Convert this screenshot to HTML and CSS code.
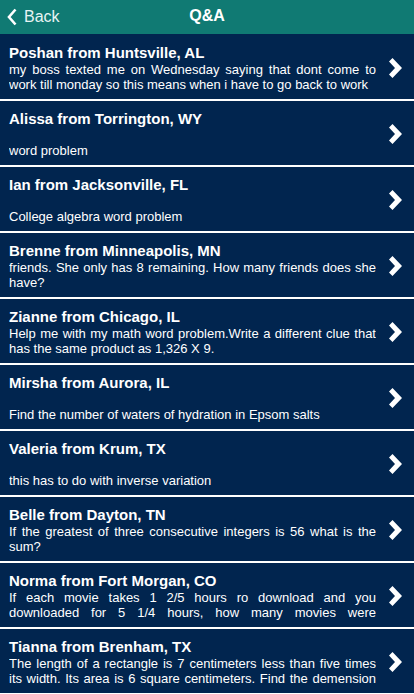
FILE: index.html
```html
<!DOCTYPE html>
<html lang="en">
<head>
  <meta charset="UTF-8">
  <meta name="viewport" content="width=device-width, initial-scale=1.0">
  <title>Q&amp;A</title>
  <link rel="stylesheet" href="styles.css">
</head>
<body>
  <div class="header">
    <a class="back" href="#">
      <svg class="back-icon" viewBox="0 0 10 18" width="10" height="18">
        <polyline points="8.5,1.5 2,9 8.5,16.5" fill="none" stroke="#fff" stroke-width="2.6"/>
      </svg>
      <span>Back</span>
    </a>
    <div class="title">Q&amp;A</div>
  </div>

  <ul class="list">
    <li class="item">
      <div class="item-text">
        <div class="name">Poshan from Huntsville, AL</div>
        <div class="question"><p>my boss texted me on Wednesday saying that dont come to work till monday so this means when i have to go back to work</p></div>
      </div>
      <svg class="chevron" viewBox="0 0 14 20" width="14" height="20"><polygon points="1,3.5 4.5,0 14,10 4.5,20 1,16.5 7,10" fill="#fff"/></svg>
    </li>
    <li class="item">
      <div class="item-text">
        <div class="name">Alissa from Torrington, WY</div>
        <div class="question"><p>word problem</p></div>
      </div>
      <svg class="chevron" viewBox="0 0 14 20" width="14" height="20"><polygon points="1,3.5 4.5,0 14,10 4.5,20 1,16.5 7,10" fill="#fff"/></svg>
    </li>
    <li class="item">
      <div class="item-text">
        <div class="name">Ian from Jacksonville, FL</div>
        <div class="question"><p>College algebra word problem</p></div>
      </div>
      <svg class="chevron" viewBox="0 0 14 20" width="14" height="20"><polygon points="1,3.5 4.5,0 14,10 4.5,20 1,16.5 7,10" fill="#fff"/></svg>
    </li>
    <li class="item">
      <div class="item-text">
        <div class="name">Brenne from Minneapolis, MN</div>
        <div class="question"><p>friends. She only has 8 remaining. How many friends does she have?</p></div>
      </div>
      <svg class="chevron" viewBox="0 0 14 20" width="14" height="20"><polygon points="1,3.5 4.5,0 14,10 4.5,20 1,16.5 7,10" fill="#fff"/></svg>
    </li>
    <li class="item">
      <div class="item-text">
        <div class="name">Zianne from Chicago, IL</div>
        <div class="question"><p>Help me with my math word problem.Write a different clue that has the same product as 1,326 X 9.</p></div>
      </div>
      <svg class="chevron" viewBox="0 0 14 20" width="14" height="20"><polygon points="1,3.5 4.5,0 14,10 4.5,20 1,16.5 7,10" fill="#fff"/></svg>
    </li>
    <li class="item">
      <div class="item-text">
        <div class="name">Mirsha from Aurora, IL</div>
        <div class="question"><p>Find the number of waters of hydration in Epsom salts</p></div>
      </div>
      <svg class="chevron" viewBox="0 0 14 20" width="14" height="20"><polygon points="1,3.5 4.5,0 14,10 4.5,20 1,16.5 7,10" fill="#fff"/></svg>
    </li>
    <li class="item">
      <div class="item-text">
        <div class="name">Valeria from Krum, TX</div>
        <div class="question"><p>this has to do with inverse variation</p></div>
      </div>
      <svg class="chevron" viewBox="0 0 14 20" width="14" height="20"><polygon points="1,3.5 4.5,0 14,10 4.5,20 1,16.5 7,10" fill="#fff"/></svg>
    </li>
    <li class="item">
      <div class="item-text">
        <div class="name">Belle from Dayton, TN</div>
        <div class="question"><p>If the greatest of three consecutive integers is 56 what is the sum?</p></div>
      </div>
      <svg class="chevron" viewBox="0 0 14 20" width="14" height="20"><polygon points="1,3.5 4.5,0 14,10 4.5,20 1,16.5 7,10" fill="#fff"/></svg>
    </li>
    <li class="item">
      <div class="item-text">
        <div class="name">Norma from Fort Morgan, CO</div>
        <div class="question"><p class="cut">If each movie takes 1 2/5 hours ro download and you downloaded for 5 1/4 hours, how many movies were</p></div>
      </div>
      <svg class="chevron" viewBox="0 0 14 20" width="14" height="20"><polygon points="1,3.5 4.5,0 14,10 4.5,20 1,16.5 7,10" fill="#fff"/></svg>
    </li>
    <li class="item">
      <div class="item-text">
        <div class="name">Tianna from Brenham, TX</div>
        <div class="question"><p class="cut">The length of a rectangle is 7 centimeters less than five times its width. Its area is 6 square centimeters. Find the demension</p></div>
      </div>
      <svg class="chevron" viewBox="0 0 14 20" width="14" height="20"><polygon points="1,3.5 4.5,0 14,10 4.5,20 1,16.5 7,10" fill="#fff"/></svg>
    </li>
  </ul>
</body>
</html>
```

FILE: styles.css
```css
* {
    margin: 0;
    padding: 0;
    box-sizing: border-box;
}

:root {
    --header-background: #107a73;
    --list-background: #01254f;
    --text-color: #ffffff;
    --separator-color: #ffffff;
}

body {
    font-family: "Liberation Sans", Arial, sans-serif;
    background-color: var(--list-background);
    color: var(--text-color);
    height: 694px;
    overflow: hidden;
}

.header {
    height: 34px;
    background: var(--header-background);
    display: grid;
    grid-template-columns: 1fr auto 1fr;
    align-items: center;
}

.back {
    display: flex;
    align-items: center;
    gap: 7px;
    padding-left: 7px;
    color: #e8f4f3;
    text-decoration: none;
    font-size: 16px;
}

.back-icon {
    display: block;
}

.title {
    font-size: 16px;
    font-weight: bold;
    padding-bottom: 3px;
}

.list {
    list-style: none;
}

.item {
    display: flex;
    align-items: center;
    height: 66px;
    padding: 9px 0 7px 9px;
    border-bottom: 2px solid var(--separator-color);
}

.item:first-child {
    height: 67px;
    padding-top: 10px;
}

.item-text {
    flex: 1;
    align-self: stretch;
    min-width: 0;
}

.name {
    font-size: 15px;
    font-weight: bold;
    line-height: 18px;
}

.question {
    height: 30px;
    display: flex;
    align-items: flex-end;
    font-size: 13px;
    line-height: 15px;
}

.question p {
    max-height: 30px;
    overflow: hidden;
    text-align: justify;
    width: 100%;
}

.question p.cut {
    text-align-last: justify;
}

.chevron {
    flex: none;
    display: block;
    margin: 0 12px 0 12px;
}
```
